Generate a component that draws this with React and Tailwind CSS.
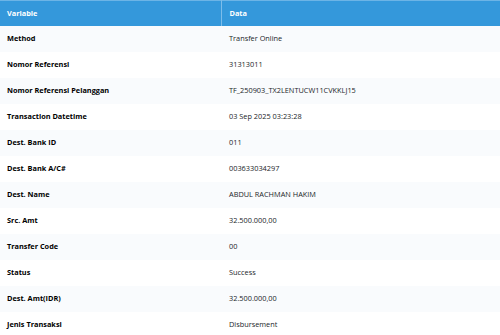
import React from 'react';

const rows = [
  ['Method', 'Transfer Online'],
  ['Nomor Referensi', '31313011'],
  ['Nomor Referensi Pelanggan', 'TF_250903_TX2LENTUCW11CVKKLJ15'],
  ['Transaction Datetime', '03 Sep 2025 03:23:28'],
  ['Dest. Bank ID', '011'],
  ['Dest. Bank A/C#', '003633034297'],
  ['Dest. Name', 'ABDUL RACHMAN HAKIM'],
  ['Src. Amt', '32.500.000,00'],
  ['Transfer Code', '00'],
  ['Status', 'Success'],
  ['Dest. Amt(IDR)', '32.500.000,00'],
  ['Jenis Transaksi', 'Disbursement'],
];

export default function App() {
  return (
    <div className="w-[500px] h-[335px] overflow-hidden bg-white font-['Open_Sans',sans-serif] text-[7.35px] text-[#212529]">
      <table className="w-full border-collapse">
        <thead>
          <tr className="bg-[#3498db] text-white h-[25px] border-t border-[#6cb4e6]">
            <th className="w-[221px] text-left font-bold px-[7px] border-r border-[#7dbdea]">Variable</th>
            <th className="text-left font-bold px-[8px]">Data</th>
          </tr>
        </thead>
        <tbody>
          {rows.map(([k, v], i) => (
            <tr key={k} className={`h-[26px] ${i % 2 === 0 ? 'bg-[#f9fbfd]' : 'bg-white'}`}>
              <td className="px-[7px] font-bold text-black">{k}</td>
              <td className="px-[8px]">{v}</td>
            </tr>
          ))}
        </tbody>
      </table>
    </div>
  );
}
